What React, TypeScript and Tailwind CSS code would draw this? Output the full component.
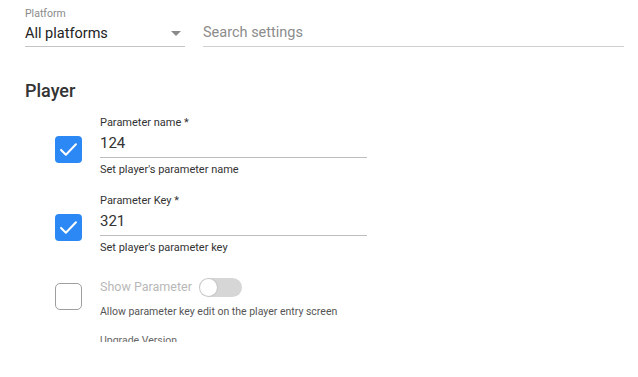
import React from "react";

type Field = { key: string; label: string; value: string; help: string };

const fields: Field[] = [
  { key: "name", label: "Parameter name *", value: "124", help: "Set player's parameter name" },
  { key: "key", label: "Parameter Key *", value: "321", help: "Set player's parameter key" },
];

function Check({ checked }: { checked: boolean }) {
  if (!checked) {
    return <div className="w-[27px] h-[27px] rounded-[5px] border border-[#9e9e9e] bg-white flex-shrink-0" />;
  }
  return (
    <div className="w-[27px] h-[27px] rounded-[4px] bg-[#2b88f5] flex items-center justify-center flex-shrink-0">
      <svg width="21" height="21" viewBox="0 0 24 24" fill="none">
        <path d="M3.5 12.5l5.5 5.5L20.5 6" stroke="white" strokeWidth="2.3" strokeLinecap="round" strokeLinejoin="round" />
      </svg>
    </div>
  );
}

export default function App() {
  return (
    <div className="w-[638px] h-[377px] bg-white overflow-hidden" style={{ fontFamily: "Roboto, 'Noto Sans', sans-serif" }}>
      <div className="h-[342px] overflow-hidden">
        {/* Filters */}
        <div className="flex items-end pl-[25px] pr-[14px] pt-[7px]">
          <div className="w-[160px]">
            <div className="text-[10.5px] leading-[14px] text-[#8a8a8a]">Platform</div>
            <div className="h-[26px] flex items-center justify-between border-b border-[#c4c4c4]">
              <span className="text-[14.5px] text-[#222]">All platforms</span>
              <svg width="10" height="6" viewBox="0 0 10 6" className="mr-[4px]">
                <path d="M0 0h10L5 5z" fill="#8a8a8a" />
              </svg>
            </div>
          </div>
          <div className="flex-1 ml-[18px] h-[27px] flex items-center border-b border-[#d0d0d0]">
            <span className="text-[14.5px] text-[#8c8c8c]">Search settings</span>
          </div>
        </div>

        {/* Player */}
        <div className="pl-[25px] mt-[32px] text-[18px] leading-[24px] font-medium text-[#333]">Player</div>

        <div className="pl-[55px] mt-[13px] flex flex-col gap-[17px]">
          {fields.map(f => (
            <div key={f.key} className="flex">
              <div className="pt-[20px]">
                <Check checked />
              </div>
              <div className="ml-[18px] w-[267px]">
                <div className="text-[11px] leading-[14px] text-[#333]">{f.label}</div>
                <div className="h-[28px] flex items-center border-b border-[#bdbdbd] text-[15px] text-[#333]">{f.value}</div>
                <div className="mt-[5px] text-[11px] leading-[14px] text-[#333]">{f.help}</div>
              </div>
            </div>
          ))}

          <div className="flex mt-[5px]">
            <div className="pt-[6px]">
              <Check checked={false} />
            </div>
            <div className="ml-[18px]">
              <div className="flex items-center h-[20px] gap-[7px]">
                <span className="text-[12.5px] text-[#b8b8b8]">Show Parameter</span>
                <div className="w-[43px] h-[19px] rounded-full bg-[#d6d6d6] flex items-center px-[1px]">
                  <div className="w-[17px] h-[17px] rounded-full bg-white shadow-[0_0_1px_1px_rgba(0,0,0,0.08)]" />
                </div>
              </div>
              <div className="mt-[8px] text-[10.5px] leading-[14px] text-[#555]">Allow parameter key edit on the player entry screen</div>
              <div className="mt-[15px] text-[10.5px] leading-[14px] text-[#666]">Upgrade Version</div>
            </div>
          </div>
        </div>
      </div>
    </div>
  );
}
